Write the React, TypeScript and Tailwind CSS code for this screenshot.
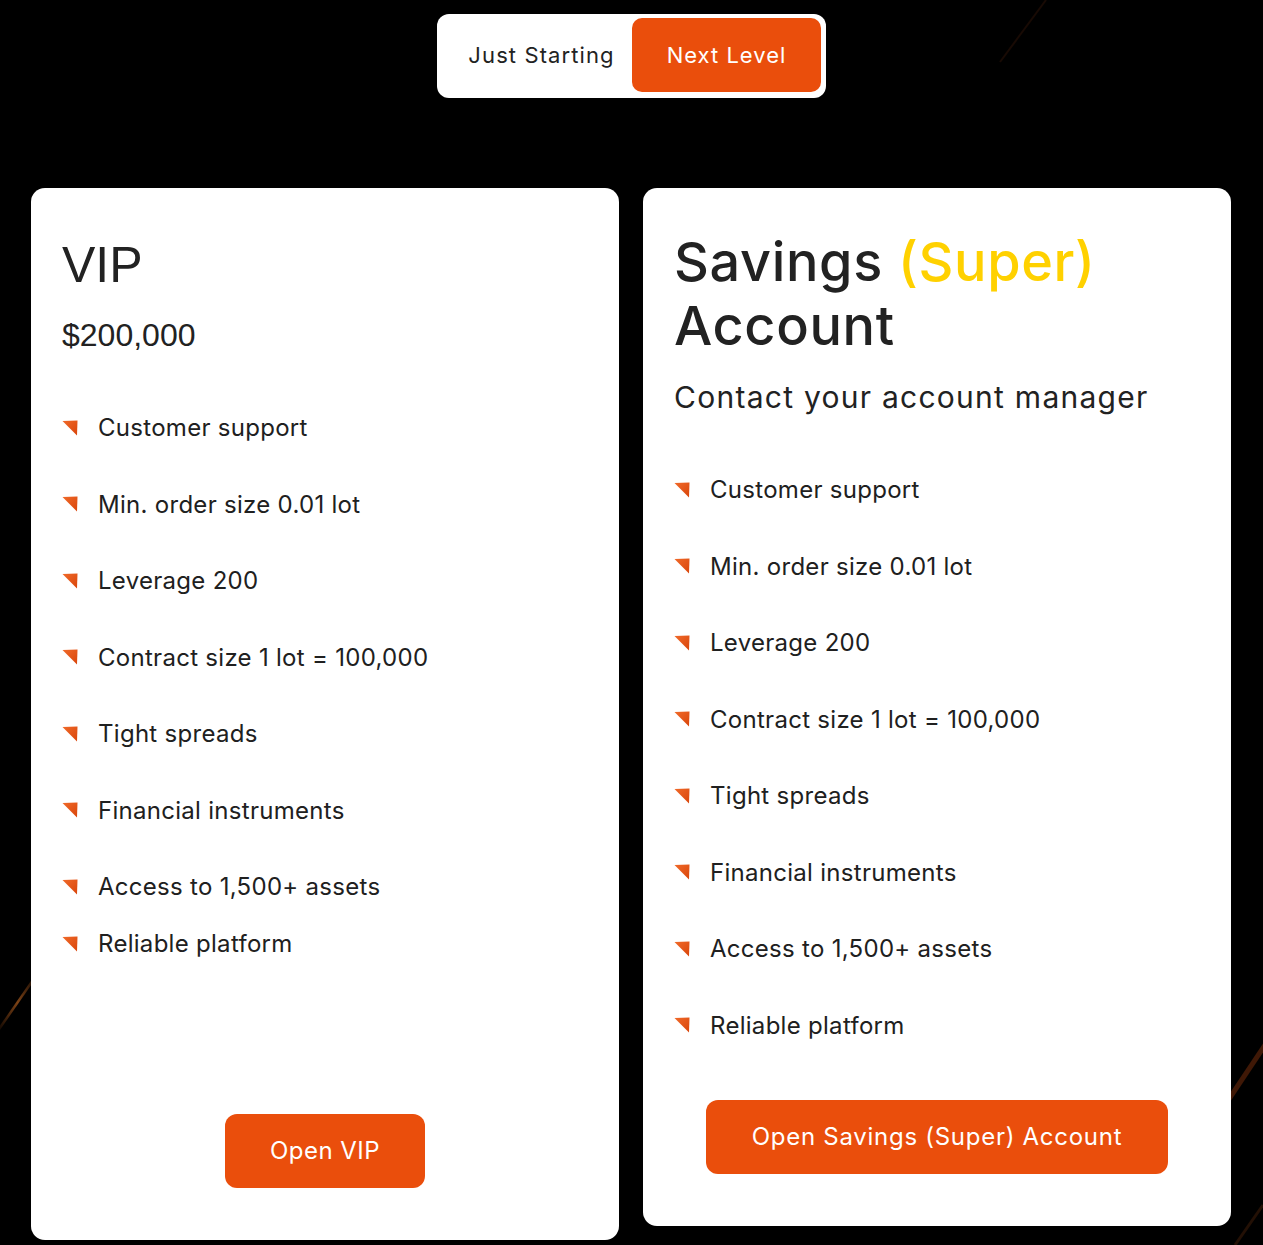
import React from "react";

const features = [
  "Customer support",
  "Min. order size 0.01 lot",
  "Leverage 200",
  "Contract size 1 lot = 100,000",
  "Tight spreads",
  "Financial instruments",
  "Access to 1,500+ assets",
  "Reliable platform",
];

function Bullet() {
  return (
    <svg width="16" height="16" viewBox="0 0 16 16" className="shrink-0">
      <defs>
        <linearGradient id="bg1" x1="0" y1="0" x2="1" y2="1">
          <stop offset="0" stopColor="#f06a2a" />
          <stop offset="1" stopColor="#d9450a" />
        </linearGradient>
      </defs>
      <polygon points="0.5,1 15.5,0.5 15,15.5" fill="url(#bg1)" />
    </svg>
  );
}

function FeatureList({ compactLast }: { compactLast?: boolean }) {
  return (
    <ul className="flex flex-col gap-[41px]">
      {features.map((f, i) => (
        <li
          key={f}
          className={
            "flex items-center gap-[20px] h-[35.5px] text-[24px] leading-[35.5px] tracking-[0.012em] text-[#202020] " +
            (compactLast && i === features.length - 1 ? "-mt-[19.5px]" : "")
          }
        >
          <Bullet />
          <span>{f}</span>
        </li>
      ))}
    </ul>
  );
}

export default function App() {
  return (
    <div className="relative min-h-[1245px] overflow-hidden bg-black font-['Inter','Noto_Sans',sans-serif]">
      <svg
        className="pointer-events-none absolute inset-0"
        width="1263"
        height="1245"
        viewBox="0 0 1263 1245"
      >
        <defs>
          <linearGradient id="streak" x1="0" y1="1" x2="1" y2="0">
            <stop offset="0" stopColor="#7a3a10" stopOpacity="0" />
            <stop offset="0.5" stopColor="#8a4a18" stopOpacity="0.9" />
            <stop offset="1" stopColor="#7a3a10" stopOpacity="0" />
          </linearGradient>
        </defs>
        <line x1="-5" y1="1035" x2="40" y2="970" stroke="url(#streak)" strokeWidth="2.5" />
        <line x1="1225" y1="1105" x2="1275" y2="1030" stroke="#5a2208" strokeOpacity="0.7" strokeWidth="5" />
        <line x1="1235" y1="1245" x2="1263" y2="1205" stroke="#3a1a08" strokeOpacity="0.6" strokeWidth="3" />
        <line x1="1000" y1="62" x2="1046" y2="0" stroke="#1e0d05" strokeOpacity="0.8" strokeWidth="2" />
      </svg>

      <div className="relative flex justify-center pt-[14px]">
        <div className="flex rounded-[12px] bg-white pb-[6px] pl-[4px] pr-[5px] pt-[4px]">
          <div className="flex h-[74px] w-[191px] items-center justify-center pl-[10px] text-[22px] tracking-[0.05em] text-[#222222]">
            Just Starting
          </div>
          <div className="flex h-[74px] w-[189px] items-center justify-center rounded-[10px] bg-[#ea4e0c] text-[22px] tracking-[0.045em] text-white">
            Next Level
          </div>
        </div>
      </div>

      <div className="relative mt-[90px] flex items-start gap-[24px] pl-[31px] pr-[32px]">
        {/* VIP card */}
        <div className="flex w-[588px] flex-col rounded-[14px] bg-white px-[31px] pb-[52px] pt-[47px]">
          <h2 className="font-['Liberation_Sans',Arial,sans-serif] text-[50px] leading-[60px] text-[#222222]">
            VIP
          </h2>
          <div className="mt-[20px] font-['Liberation_Sans',Arial,sans-serif] text-[32px] leading-[40px] text-[#222222]">
            $200,000
          </div>
          <div className="mt-[55px]">
            <FeatureList compactLast />
          </div>
          <div className="mt-[152px] flex justify-center">
            <button className="flex h-[74px] w-[200px] items-center justify-center rounded-[12px] bg-[#ea4e0c] text-[24px] tracking-[0.02em] text-white">
              Open VIP
            </button>
          </div>
        </div>

        {/* Savings card */}
        <div className="flex w-[588px] flex-col rounded-[14px] bg-white px-[31px] pb-[52px] pt-[42px]">
          <h2 className="text-[54px] font-medium leading-[64px] tracking-[0.012em] text-[#222222]">
            Savings <span className="text-[#ffd100]">(Super)</span>
            <br />
            Account
          </h2>
          <div className="mt-[19px] text-[30px] leading-[40px] tracking-[0.042em] text-[#222222]">
            Contact your account manager
          </div>
          <div className="mt-[55px]">
            <FeatureList />
          </div>
          <div className="mt-[57px] flex justify-center">
            <button className="flex h-[74px] w-[462px] items-center justify-center rounded-[12px] bg-[#ea4e0c] text-[24px] tracking-[0.03em] text-white">
              Open Savings (Super) Account
            </button>
          </div>
        </div>
      </div>
    </div>
  );
}
